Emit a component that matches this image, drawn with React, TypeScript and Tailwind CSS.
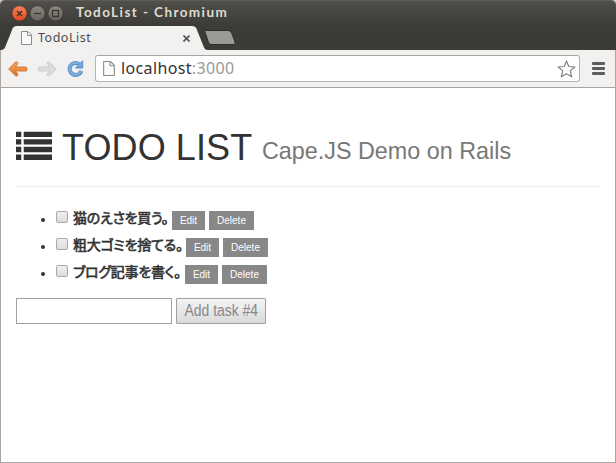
import React from "react";

const tasks = [
  { title: "猫のえさを買う。", width: "w-[99px]" },
  { title: "粗大ゴミを捨てる。", width: "w-[113px]" },
  { title: "ブログ記事を書く。", width: "w-[112px]" },
];

function PageIcon({ className }: { className: string }) {
  return (
    <svg className={className} viewBox="0 0 11 14" fill="none">
      <path d="M.5.5H7L10.500 4V13.500H.5Z" fill="#fbfbfb" stroke="#8c8c8c" />
      <path d="M6.500.5V4.500H10.500" stroke="#8c8c8c" />
    </svg>
  );
}

function TitleBar() {
  return (
    <div className="flex h-[26px] items-start">
      <svg className="ml-[11px] mt-1 h-4 w-[54px] shrink-0" viewBox="0 0 54 16">
        <defs>
          <linearGradient id="close" x2="0" y2="1">
            <stop stopColor="#f4835c" />
            <stop offset="1" stopColor="#df4b1d" />
          </linearGradient>
          <linearGradient id="gray" x2="0" y2="1">
            <stop stopColor="#8b8880" />
            <stop offset="1" stopColor="#66645d" />
          </linearGradient>
        </defs>
        <circle cx="8.500" cy="8.300" r="7.600" fill="url(#close)" stroke="#302f2a" strokeWidth=".6" />
        <circle cx="26.500" cy="8.300" r="7.600" fill="url(#gray)" stroke="#302f2a" strokeWidth=".6" />
        <circle cx="44.500" cy="8.300" r="7.600" fill="url(#gray)" stroke="#302f2a" strokeWidth=".6" />
        <path d="M6 6L11 11M11 6L6 11" stroke="#3a2a22" strokeWidth="1.300" />
        <path d="M23 8.500H30" stroke="#35342f" strokeWidth="1.200" />
        <rect x="41.500" y="5.500" width="6" height="6" fill="none" stroke="#35342f" strokeWidth="1.200" />
      </svg>
      <span className="ml-[11px] mt-[1px] whitespace-nowrap font-['Lato',sans-serif] text-[13.500px] font-bold leading-5 tracking-[1.420px] text-[#dfdbd2]">
        TodoList - Chromium
      </span>
    </div>
  );
}

function TabStrip() {
  return (
    <div className="flex h-6">
      <div className="relative h-6 w-[208px] shrink-0">
        <svg className="absolute inset-0 h-6 w-[208px]" viewBox="0 0 208 24">
          <path d="M0 24C4 24 5 22 6 19L12 4C13 1 14 0 17 0H191C195 0 196 1 197 4L203 19C204 22 205 24 208 24Z" fill="#f2f1f0" />
        </svg>
        <div className="relative flex h-6 items-center pl-[21px]">
          <PageIcon className="h-[14px] w-[11px]" />
          <span className="ml-[6px] w-[120px] whitespace-nowrap font-['Noto_Sans',sans-serif] text-[12.500px] leading-5 tracking-[0.500px] text-[#4c4c4c]">
            TodoList
          </span>
          <svg className="ml-[25px] h-[7px] w-[7px]" viewBox="0 0 7 7">
            <path d="M.5.5L6.500 6.500M6.500.5L.5 6.500" stroke="#555" strokeWidth="1.600" />
          </svg>
        </div>
      </div>
      <svg className="-ml-[4px] mt-1 h-[15px] w-[32px]" viewBox="0 0 32 15">
        <path d="M2 .5H23C26 .5 27 1 28 4L31 12C31.500 14 31 14.500 29 14.500H9C6 14.500 5 14 4 11L1 2C.7 1 1 .5 2 .5Z" fill="#9b9a97" stroke="#2d2c29" />
      </svg>
    </div>
  );
}

function Toolbar() {
  return (
    <div className="flex h-[38px] items-center border-b border-[#a5a4a2] bg-[#f2f1f0] pl-[7px]">
      <svg className="h-4 w-[20px] shrink-0" viewBox="0 0 19 16" preserveAspectRatio="none">
        <defs>
          <linearGradient id="back" x2="0" y2="1">
            <stop stopColor="#f7b070" />
            <stop offset="1" stopColor="#df6b22" />
          </linearGradient>
        </defs>
        <path d="M.8 8L7.300 1.300Q9.300.6 9.300 2.500L6.800 6H16.500Q18 6 18 8T16.500 10H6.800L9.300 13Q9.300 15.500 7.300 14.700Z" fill="url(#back)" stroke="#d77a39" />
      </svg>
      <svg className="ml-[9px] h-4 w-[20px] shrink-0" viewBox="0 0 19 16" preserveAspectRatio="none">
        <path d="M18.200 8L11.700 1.300Q9.700.6 9.700 2.500L12.200 6H2.500Q1 6 1 8T2.500 10H12.200L9.700 13Q9.700 15.500 11.700 14.700Z" fill="#dddcda" stroke="#cfcecc" />
      </svg>
      <svg className="ml-[10px] h-[17px] w-[17px] shrink-0" viewBox="0 0 17 17">
        <path d="M14.300 11A6 6 0 1 1 12.300 4.200" fill="none" stroke="#528dc7" strokeWidth="4" />
        <path d="M14.100 10.700A6 6 0 1 1 12.500 4.200" fill="none" stroke="#7fb1df" strokeWidth="2.200" />
        <path d="M15.700.8V8H8.500L11 5.500L13 3.500Z" fill="#75a9da" stroke="#528dc7" />
      </svg>
      <div className="ml-[11px] flex h-[27px] w-[485px] shrink-0 items-center rounded-[3px] border border-[#b5b4b2] border-t-[#a5a4a2] bg-white pl-[7px]">
        <PageIcon className="h-[15px] w-[12px] shrink-0" />
        <span className="-mt-[2px] ml-[6px] whitespace-nowrap font-['Noto_Sans',sans-serif] text-[16px] leading-5 tracking-[0.360px] text-[#333]">
          localhost<span className="text-[#999]">:3000</span>
        </span>
        <svg className="ml-auto mr-[3px] h-[18px] w-[19px]" viewBox="0 0 19 18">
          <path d="M9.500 1L11.800 6.500L17.800 7L13.300 10.900L14.700 16.800L9.500 13.700L4.300 16.800L5.700 10.900L1.200 7L7.200 6.500Z" fill="#fff" stroke="#828282" strokeWidth="1.200" strokeLinejoin="round" />
        </svg>
      </div>
      <div className="ml-3 flex flex-col gap-[2px]">
        <i className="h-[3px] w-[13px] rounded-[1px] bg-[#5c5d5e]" />
        <i className="h-[3px] w-[13px] rounded-[1px] bg-[#5c5d5e]" />
        <i className="h-[3px] w-[13px] rounded-[1px] bg-[#5c5d5e]" />
      </div>
    </div>
  );
}

function ListIcon() {
  return (
    <svg className="h-[29px] w-9 shrink-0" viewBox="0 0 36 29" fill="#333">
      <path d="M0 .7H5.300V5.900H0ZM7.700.7H36V5.900H7.700ZM0 8.200H5.300V13.600H0ZM7.700 8.200H36V13.600H7.700ZM0 15.800H5.300V21.200H0ZM7.700 15.800H36V21.200H7.700ZM0 23.600H5.300V29H0ZM7.700 23.600H36V29H7.700Z" />
    </svg>
  );
}

export default function App() {
  return (
    <div className="flex h-[463px] w-[616px] flex-col overflow-hidden bg-white font-['Liberation_Sans',Arial,sans-serif] text-[#333]">
      <div className="h-[50px] shrink-0 bg-[#c8c8c6]">
        <div className="h-[50px] rounded-t-[5px] border-t border-[#5e5d57] bg-linear-to-b from-[#504f49] to-[#3c3b37] to-50% [&>*:first-child]:h-[25px]">
          <TitleBar />
          <TabStrip />
        </div>
      </div>
      <div className="flex-1 border-x border-b border-[#aaa6a2]">
        <Toolbar />
        <main className="px-[15px]">
          <h1 className="mt-[39px] flex h-[60px] items-start whitespace-nowrap border-b border-[#eee]">
            <span className="mt-[4px]"><ListIcon /></span>
            <span className="ml-[10px] mt-[1px] w-[190px] text-[36px] leading-10 tracking-[0.100px]">TODO LIST</span>
            <span className="ml-[10px] mt-[10px] origin-left scale-x-[0.957] text-[24.400px] leading-[28px] text-[#777]">Cape.JS Demo on Rails</span>
          </h1>
          <ul className="mt-[24px] flex flex-col gap-2">
            {tasks.map((task) => (
              <li key={task.title} className="flex h-[19px] items-start pl-[25px]">
                <i className="mt-[7px] h-1 w-1 rounded-full bg-[#333]" />
                <input type="checkbox" className="ml-[11px] h-3 w-3 shrink-0 appearance-none rounded-[2px] border border-[#aaa] bg-linear-to-b from-[#eee] to-[#ddd]" />
                <span className={`${task.width} ml-[5px] -mt-[4px] shrink-0 whitespace-nowrap font-['Noto_Sans_CJK_JP',sans-serif] text-[14px] font-normal leading-5 tracking-[-0.250px] [-webkit-text-stroke:0.600px_#333] [font-feature-settings:'palt']`}>
                  {task.title}
                </span>
                <button className="h-[19px] w-[33px] bg-[#888] text-[10px] leading-[19px] text-white">Edit</button>
                <button className="ml-1 h-[19px] w-[45px] bg-[#888] text-[10px] leading-[19px] text-white">Delete</button>
              </li>
            ))}
          </ul>
          <form className="mt-[14px] flex gap-1">
            <input type="text" className="h-[26px] w-[156px] border border-[#a0a0a0] bg-white" />
            <button type="button" className="flex h-[26px] w-[90px] items-center justify-center whitespace-nowrap rounded-[1px] border border-[#a0a0a0] bg-linear-to-b from-[#f4f4f4] to-[#dadada] text-[16px] leading-6 text-[#888]">
              <span className="scale-x-[0.870]">Add task #4</span>
            </button>
          </form>
        </main>
      </div>
    </div>
  );
}
